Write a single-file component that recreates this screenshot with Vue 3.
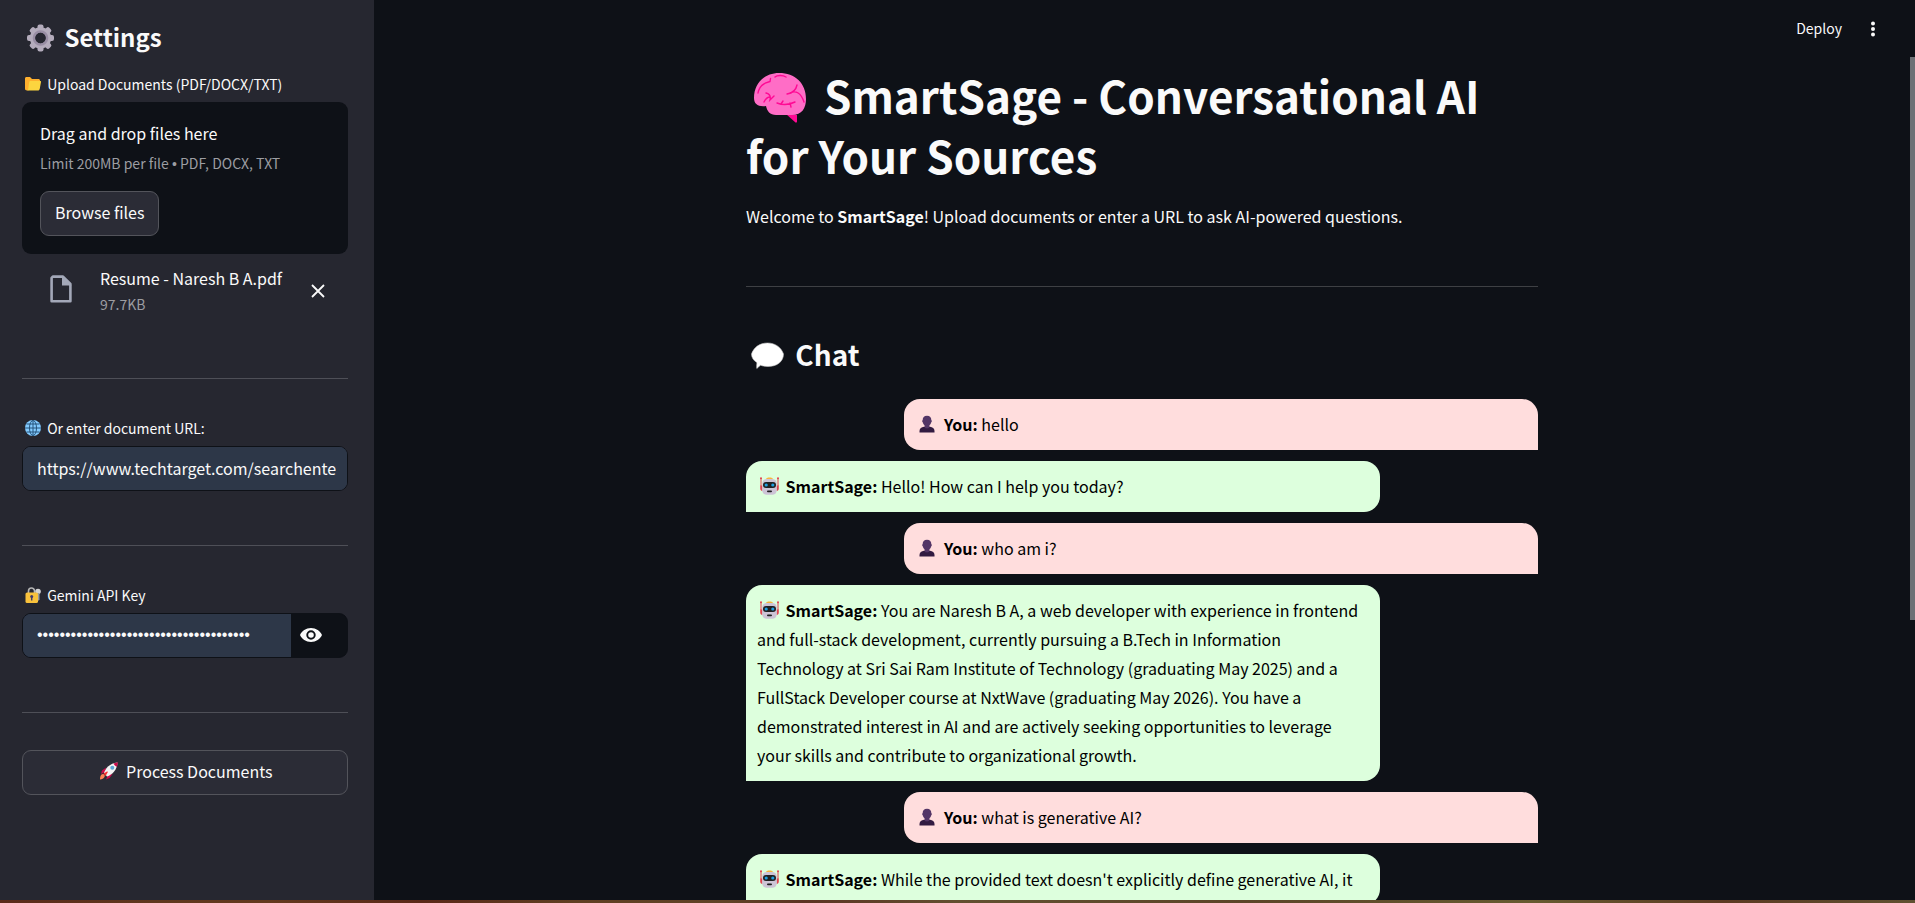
<script setup>
import { ref, h } from 'vue'

const url = ref('https://www.techtarget.com/searchenterpriseai')
const apiKey = ref('x'.repeat(38))
const showKey = ref(false)
const teeth = [0, 45, 90, 135, 180, 225, 270, 315]

const messages = [
  { role: 'user', text: 'hello' },
  { role: 'bot', text: 'Hello! How can I help you today?' },
  { role: 'user', text: 'who am i?' },
  {
    role: 'bot',
    text: 'You are Naresh B A, a web developer with experience in frontend and full-stack development, currently pursuing a B.Tech in Information Technology at Sri Sai Ram Institute of Technology (graduating May 2025) and a FullStack Developer course at NxtWave (graduating May 2026). You have a demonstrated interest in AI and are actively seeking opportunities to leverage your skills and contribute to organizational growth.',
  },
  { role: 'user', text: 'what is generative AI?' },
  { role: 'bot', text: "While the provided text doesn't explicitly define generative AI, it" },
]

const PersonIcon = () =>
  h('svg', { class: 'emoji', width: 25, height: 18, viewBox: '0 0 25 18', 'aria-hidden': 'true' }, [
    h('path', { fill: '#321b41', d: 'M4.5 17.5V16c0-2.5 2-3.8 4.5-4.2h6c2.5.4 4.5 1.7 4.5 4.2v1.5z' }),
    h('path', { fill: '#533566', d: 'M12 .8c3 0 4.3 1.7 4.3 4.3.7.1.7 2.3-.2 2.5-.3 1.4-.9 2.2-1.7 2.9v1.7c-1 1.6-3.8 1.6-4.8 0v-1.7C8.8 9.8 8.2 9 7.9 7.6 7 7.4 7 5.2 7.7 5.1 7.7 2.5 9 .8 12 .8z' }),
  ])

const RobotIcon = () =>
  h('svg', { class: 'emoji', width: 25, height: 18, viewBox: '0 0 25 18', 'aria-hidden': 'true' }, [
    h('path', { stroke: '#e0434f', 'stroke-width': 1, fill: 'none', d: 'M4 1v8M21 1v8' }),
    h('circle', { cx: 4, cy: 1.2, r: 1, fill: '#e0434f' }),
    h('circle', { cx: 21, cy: 1.2, r: 1, fill: '#e0434f' }),
    h('path', { fill: '#e0434f', d: 'M3.2 8.5h2.3v5.5c-1.5 0-2.3-1-2.3-2.5zM21.8 8.5h-2.3v5.5c1.5 0 2.3-1 2.3-2.5z' }),
    h('path', { fill: '#f9b53c', d: 'M9 2.5C9 1 10.5.5 12.5.5S16 1 16 2.5z' }),
    h('rect', { x: 5.2, y: 2, width: 14.6, height: 15.8, rx: 4.5, fill: '#cdc4d6' }),
    h('rect', { x: 6, y: 5, width: 13, height: 6, rx: 3, fill: '#212121' }),
    h('circle', { cx: 9.2, cy: 8, r: 1.6, fill: '#1e9fe0' }),
    h('circle', { cx: 15.8, cy: 8, r: 1.6, fill: '#1e9fe0' }),
    h('rect', { x: 10, y: 13.4, width: 5, height: 1.8, rx: 0.9, fill: '#212121' }),
  ])
</script>

<template>
  <div class="page">
    <aside class="sidebar">
      <h2 class="side-title">
        <svg class="gear" width="37" height="28" viewBox="0 0 37 28" aria-hidden="true">
          <g transform="translate(18.5 14)">
            <rect v-for="a in teeth" :key="a" x="-3" y="-13.5" width="6" height="7" rx="2" fill="#b4acbc" :transform="`rotate(${a})`" />
            <circle r="8.2" fill="none" stroke="#b4acbc" stroke-width="5" />
            <circle r="6.6" fill="none" stroke="#998ea4" stroke-width="2.4" />
          </g>
        </svg>
        Settings
      </h2>

      <label class="label" for="files">
        <svg class="small" width="22" height="16" viewBox="0 0 22 16" aria-hidden="true">
          <path fill="#ffb02e" d="M3 2.5C3 1.7 3.6 1 4.5 1H8l2 2h6.5c.8 0 1.5.7 1.5 1.5V12L5 14.5c-1.200 0-2-.8-2-1.7z" />
          <path fill="#fcd53f" d="M8.2 5h10c.6 0 .9.4.8 1l-1.3 7c-.2.9-.8 1.5-1.7 1.5H4.5c1 0 1.5-.6 1.7-1.5l1-7c.1-.6.5-1 1-1z" />
        </svg>
        Upload Documents (PDF/DOCX/TXT)
      </label>
      <div class="dropzone">
        <div class="drop-main">Drag and drop files here</div>
        <div class="hint">Limit 200MB per file <span class="dot">•</span> PDF, DOCX, TXT</div>
        <button id="files" type="button" class="button browse">Browse files</button>
      </div>
      <div class="file">
        <svg class="file-icon" width="22" height="28" viewBox="0 0 22 28" aria-hidden="true">
          <path fill="none" stroke="#a3a8b8" stroke-width="2.6" stroke-linejoin="round" d="M2.800 1.600H13L20.400 9v17.200H1.600V2.800z" />
          <path fill="#a3a8b8" d="M12 1l9.500 9.500H12z" />
        </svg>
        <div class="file-text">
          <div class="file-name">Resume - Naresh B A.pdf</div>
          <div class="hint">97.7KB</div>
        </div>
        <button type="button" class="icon-button" aria-label="Remove file">
          <svg width="14" height="14" viewBox="0 0 14 14" aria-hidden="true">
            <path stroke="#fafafa" stroke-width="1.8" d="M1 1l12 12M13 1L1 13" />
          </svg>
        </button>
      </div>

      <hr class="rule" />
      <label class="label" for="url">
        <svg class="small" width="22" height="16" viewBox="0 0 22 16" aria-hidden="true">
          <circle cx="11" cy="8" r="8" fill="#83cbff" />
          <g fill="none" stroke="#26547c" stroke-width="1">
            <ellipse cx="11" cy="8" rx="3.5" ry="7.5" />
            <path d="M11 0v16M3 8h16M4.5 4h13M4.5 12h13" />
          </g>
        </svg>
        Or enter document URL:
      </label>
      <div class="field"><input id="url" v-model="url" type="text" /></div>

      <hr class="rule" />
      <label class="label" for="key">
        <svg class="small" width="22" height="16" viewBox="0 0 22 16" aria-hidden="true">
          <circle cx="16" cy="4.5" r="2.8" fill="#d3d3d3" />
          <path fill="#9b9b9b" d="M15 6h2.5v6.5L16 14z" />
          <path fill="none" stroke="#b5b5b5" stroke-width="1.6" d="M6.5 6V4a3 3 0 0 1 6 0v2" />
          <rect x="3.5" y="5.5" width="12.5" height="10.5" rx="1.6" fill="#f9c23c" />
          <circle cx="9.7" cy="9.5" r="1.5" fill="#433b6b" />
          <path stroke="#433b6b" stroke-width="1.4" d="M9.7 9.5v4" />
        </svg>
        Gemini API Key
      </label>
      <div class="field">
        <input id="key" v-model="apiKey" class="secret" :type="showKey ? 'text' : 'password'" />
        <button type="button" class="eye" aria-label="Show password text" @click="showKey = !showKey">
          <svg width="22" height="14" viewBox="0 0 22 14" aria-hidden="true">
            <path fill="#fafafa" fill-rule="evenodd" d="M11 0C6 0 1.8 2.9 0 7c1.8 4.1 6 7 11 7s9.2-2.9 11-7c-1.8-4.1-6-7-11-7zm0 11.7a4.7 4.7 0 1 1 0-9.4 4.7 4.7 0 0 1 0 9.4zm0-7.5a2.8 2.8 0 1 0 0 5.6 2.8 2.8 0 0 0 0-5.6z" />
          </svg>
        </button>
      </div>

      <hr class="rule" />
      <button type="button" class="button process">
        <svg class="emoji" width="25" height="18" viewBox="0 0 25 18" aria-hidden="true">
          <path fill="#ff8257" d="M4.5 12.5c2-1.5 4 .5 3 2.5-.8 1.5-2.5 2.300-4.500 2.500 0-2 .3-4 1.500-5z" />
          <path fill="#ca0b4a" d="M9 5.500 5 8.500 4 12l4-2zM15.500 12l-3 4-3.500 1.500L11 13z" />
          <path fill="#f4f4f4" d="M7 11C8.500 6 12.500 1.500 20.500.5c-.5 7.500-5 12-10.500 14z" />
          <path fill="#ca0b4a" d="M16.500 1.500 21 .2l-1 4.500c-1.500-.5-2.900-1.800-3.500-3.200z" />
          <path fill="#f8312f" d="M6.500 11.500l3.800-2.300.5 1-2.300 3.800z" />
          <circle cx="15.300" cy="5.700" r="2" fill="#5fa8d8" />
        </svg>
        Process Documents
      </button>
    </aside>

    <main class="main">
      <header class="toolbar">
        <button type="button" class="deploy">Deploy</button>
        <button type="button" class="icon-button" aria-label="Main menu">
          <svg width="6" height="16" viewBox="0 0 6 16" aria-hidden="true">
            <g fill="#fafafa">
              <circle cx="3" cy="2.5" r="2" />
              <circle cx="3" cy="8" r="2" />
              <circle cx="3" cy="13.5" r="2" />
            </g>
          </svg>
        </button>
      </header>

      <div class="block">
        <h1 class="title">
          <svg class="brain" width="68" height="50" viewBox="0 0 68 50" aria-hidden="true">
            <path fill="#ff0a94" d="M40 41l11 1v6.5c0 1-1 1.500-1.800.8z" />
            <path fill="#ff6dc6" d="M8 25C8 10 19 0 33 0c16 0 27 10 27 26 0 9-4 16-14 16H30c-6 0-9-4-10-9C12 34 8 31 8 25z" />
            <g fill="none" stroke="#ff0a94" stroke-width="1.4" stroke-linecap="round">
              <path d="M12 20C13 14 17 10 24 8.5l.5-3M29 4c2-2 8-2 11 0M20 20c4 1 5 3 4 7l4-4M18 29c2-4 4-5 6-5M41 21c6-1 9-4 10-9M44 20c6-3 11 0 14 9M31 30c5 2 12 2 18-1M35 31l2-3M44 30l1 4" />
            </g>
          </svg>
          SmartSage - Conversational AI for Your Sources
        </h1>
        <p class="welcome">Welcome to <strong>SmartSage</strong>! Upload documents or enter a URL to ask AI-powered questions.</p>
        <hr class="main-rule" />
        <h2 class="chat-title">
          <svg class="speech" width="43" height="28" viewBox="0 0 43 28" aria-hidden="true">
            <path fill="#ffffff" stroke="#c9c9c9" stroke-width=".6" d="M21.5 1C29 1 35 5 37.500 12 37.500 20 30.500 24.500 22 24.500c-3 0-5.500-.5-7.500-1.300-1 .8-2.500 2.300-3.700 3.300-.4-3 .2-4.500 0-6C7.500 18.500 5.500 15.500 5.500 12 8 5 14 1 21.500 1z" />
          </svg>
          Chat
        </h2>
        <div class="chat">
          <div v-for="(m, i) in messages" :key="i" class="bubble" :class="m.role">
            <component :is="m.role === 'user' ? PersonIcon : RobotIcon" />&#32;<strong>{{ m.role === 'user' ? 'You:' : 'SmartSage:' }}</strong>
            {{ m.text }}
          </div>
        </div>
      </div>
    </main>
    <div class="scroll-track"><div class="scroll-thumb"></div></div>
    <div class="edge"></div>
  </div>
</template>

<style>
body {
  background: #0e1117;
  overflow: hidden;
}
</style>

<style scoped>
.page {
  display: grid;
  grid-template-columns: 374px minmax(0, 1fr) 5px;
  grid-template-rows: minmax(0, 1fr) 3px;
  height: 100vh;
  background: #0e1117;
  color: #fafafa;
  font-family: "Noto Sans CJK SC", "Noto Sans", sans-serif;
  font-size: 16px;
  line-height: 29px;
}

.page * {
  box-sizing: border-box;
}

button,
input {
  font-family: inherit;
  font-size: 16px;
  color: inherit;
}

.sidebar {
  background: #262730;
  padding: 21px 26px 0 22px;
  overflow: hidden;
}

.side-title {
  margin: 0 0 19px;
  font-size: 24px;
  line-height: 32px;
  font-weight: 600;
}

.gear {
  vertical-align: -5px;
}

.emoji,
.small {
  vertical-align: -2px;
}

.label {
  display: block;
  margin-bottom: 6px;
  font-size: 14px;
  line-height: 24px;
}

.dropzone {
  padding: 17px 18px 18px;
  border-radius: 9px;
  background: #0e1117;
}

.hint {
  margin-top: 2px;
  font-size: 14px;
  line-height: 24px;
  color: #9c9da2;
}

.drop-main + .hint {
  margin-top: 3px;
}

.dot {
  font-family: "Liberation Sans", sans-serif;
  line-height: 1;
}

.button {
  height: 45px;
  padding: 0 14px 3px;
  border: 1px solid #53545b;
  border-radius: 9px;
  background: #2b2c36;
  line-height: 24px;
}

.browse {
  display: block;
  margin-top: 16px;
}

.process {
  width: 100%;
}

.file {
  display: flex;
  align-items: center;
  padding: 12px 23px 0 28px;
}

.file-icon {
  margin: 0 28px 5px 0;
}

.file-text {
  flex: 1;
}

.file-name {
  line-height: 24px;
}

.icon-button,
.deploy {
  display: flex;
  padding: 0;
  border: 0;
  background: none;
}

.rule {
  height: 1px;
  margin: 54px 0 37px;
  border: 0;
  background: #4e4f57;
}

.file + .rule {
  margin-top: 62px;
}

.field {
  display: flex;
  height: 45px;
  border: 1px solid #0e1117;
  border-radius: 9px;
  background: #0e1117;
  overflow: hidden;
}

.field input {
  flex: 1;
  min-width: 0;
  padding: 0 0 1px;
  border: 0;
  border-left: 14px solid #2d3748;
  border-right: 11px solid #2d3748;
  outline: none;
  background: #2d3748;
}

.field .secret {
  font-family: "Liberation Sans", sans-serif;
}

.eye {
  width: 56px;
  padding: 0 0 2px 9px;
  border: 0;
  background: #0e1117;
  display: flex;
  align-items: center;
}

.main {
  overflow: hidden;
}

.toolbar {
  display: flex;
  align-items: center;
  justify-content: flex-end;
  gap: 28px;
  height: 57px;
  padding: 0 34px 0 0;
}

.deploy {
  padding-bottom: 2px;
  font-size: 14px;
  line-height: 24px;
}

.block {
  max-width: 792px;
  margin: 0 auto;
  padding-top: 8px;
}

.title {
  margin: 0 0 17px;
  font-size: 44px;
  line-height: 60px;
  font-weight: 700;
}

.brain {
  vertical-align: -9px;
}

.welcome {
  margin: 0;
}

.main-rule {
  height: 1px;
  margin: 55px 0 48px;
  border: 0;
  background: #3e4044;
}

.chat-title {
  margin: 0 0 26px;
  font-size: 28px;
  line-height: 38px;
  font-weight: 600;
}

.speech {
  vertical-align: -4px;
}

.chat {
  display: flex;
  flex-direction: column;
  gap: 11px;
}

.bubble {
  width: 80%;
  padding: 11px;
  border-radius: 16px;
  color: #000000;
}

.user {
  align-self: flex-end;
  border-bottom-right-radius: 0;
  background: #ffdddd;
}

.bot {
  border-bottom-left-radius: 0;
  background: #ddffdd;
}

.scroll-thumb {
  height: 563px;
  margin-top: 57px;
  background: #6e7075;
}

.edge {
  grid-column: 1 / -1;
  background: linear-gradient(90deg, #5a2a1a, #5f371e 8%, #63391e 14%, #5a2818 22%, #5f3f22 30%, #5f4226 38%, #5c3322 42%, #625030 50%, #5c4528 65%, #665a30 80%, #5c3a22 90%, #5f5030);
}
</style>
